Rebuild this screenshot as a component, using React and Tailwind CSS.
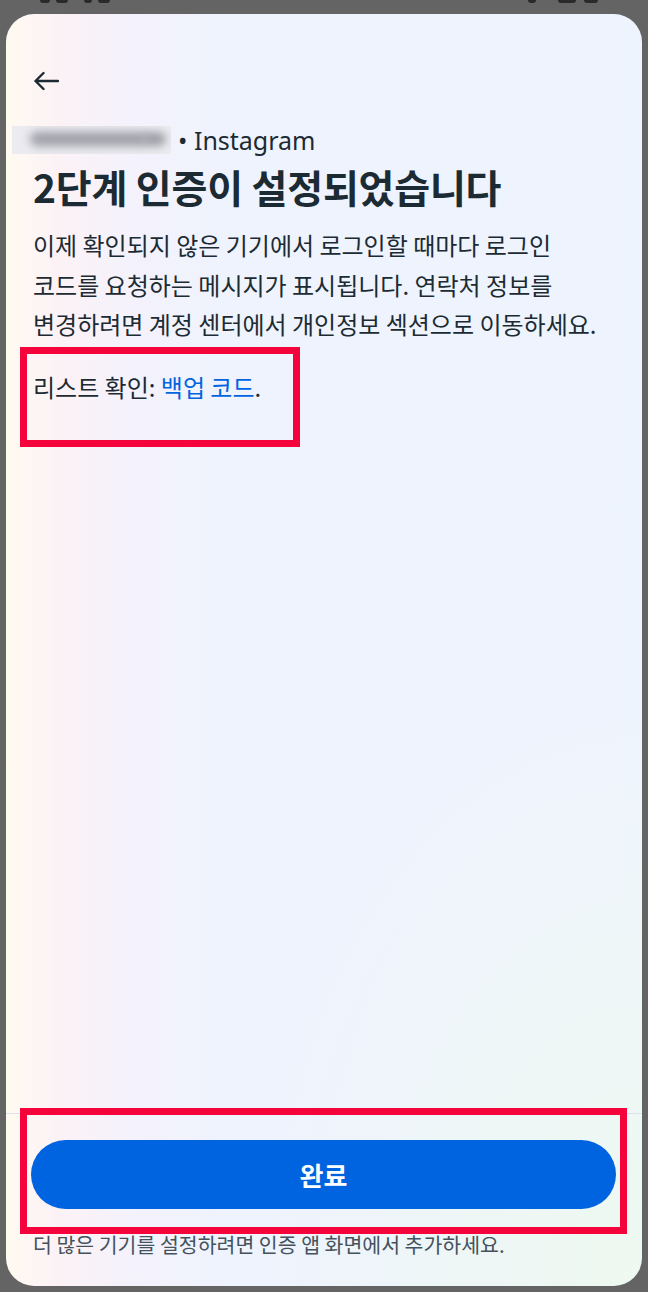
import React from "react";

const ko = { fontFamily: '"Noto Sans CJK KR", "Noto Sans", sans-serif' };

const BackArrow = () => (
  <svg width="26" height="20" viewBox="0 0 26 20" fill="none">
    <path
      d="M25 10H2.5M10.5 2L2.5 10l8 8"
      stroke="#1c2b33"
      strokeWidth="2.4"
      strokeLinecap="round"
      strokeLinejoin="round"
    />
  </svg>
);

export default function App() {
  return (
    <div
      className="w-[648px] h-[1312px] bg-[#646464] flex flex-col overflow-hidden"
      style={ko}
    >
      {/* status bar remnant, cut off by the sheet */}
      <div className="h-[14px] flex justify-between items-start px-[40px]">
        <div className="flex gap-[6px]">
          <div className="w-[10px] h-[3px] bg-[#2a2a2a] rounded-b-sm" />
          <div className="w-[12px] h-[3px] bg-[#2a2a2a] rounded-b-sm" />
          <div className="w-[8px] h-[3px] bg-[#2a2a2a] rounded-b-sm ml-[10px]" />
          <div className="w-[12px] h-[3px] bg-[#2a2a2a] rounded-b-sm" />
        </div>
        <div className="flex gap-[8px] mr-[10px]">
          <div className="w-[8px] h-[3px] bg-[#2a2a2a] rounded-b-sm" />
          <div className="w-[18px] h-[3px] bg-[#2a2a2a] rounded-b-sm ml-[14px]" />
          <div className="w-[14px] h-[3px] bg-[#2a2a2a] rounded-b-sm" />
        </div>
      </div>

      {/* sheet */}
      <div className="mx-[6px] h-[1272px] rounded-[28px] overflow-hidden flex flex-col bg-[radial-gradient(ellipse_60%_45%_at_100%_100%,#eef9f0_0%,#eef9f000_100%),linear-gradient(90deg,#fffaf1_0%,#fcf2f6_8%,#f4f2fc_20%,#eef3fd_36%,#eef4fd_100%)]">
        <div className="px-[27px] pt-[57px]">
          <BackArrow />

          <div className="mt-[34px] flex items-center h-[30px] -ml-[21px]">
            <div className="relative w-[159px] h-[28px] bg-[#ebebf0] overflow-hidden">
              <div className="absolute left-[18px] top-[6px] w-[118px] h-[14px] rounded-full bg-[#9d9fa6] blur-[5px]" />
              <div className="absolute left-[130px] top-[6px] w-[24px] h-[14px] rounded-full bg-[#9d9fa6] blur-[4px]" />
            </div>
            <span
              className="ml-[7px] text-[25px] leading-[30px] text-[#1c2b33]"
              style={{ fontFamily: '"Noto Sans", Roboto, sans-serif' }}
            >
              • Instagram
            </span>
          </div>

          <h1 className="mt-[8px] text-[39px] leading-[46px] font-bold text-[#1c2b33] tracking-[-0.2px]">
            2단계 인증이 설정되었습니다
          </h1>

          <p className="mt-[16px] text-[24px] leading-[39.5px] text-[#1c2b33]">
            이제 확인되지 않은 기기에서 로그인할 때마다 로그인
            <br />
            코드를 요청하는 메시지가 표시됩니다. 연락처 정보를
            <br />
            변경하려면 계정 센터에서 개인정보 섹션으로 이동하세요.
          </p>

          <div className="mt-[3px] -ml-[13px] w-[280px] h-[100px] border-[7px] border-[#f5033b] pl-[6px] pt-[17px]">
            <p className="text-[24px] leading-[32px] text-[#1c2b33]">
              리스트 확인: <span className="text-[#0064e0]">백업 코드</span>.
            </p>
          </div>
        </div>

        <div className="flex-1" />

        <div className="border-t border-[#dde2ea]">
          <div className="-mt-[6px] ml-[14px] mr-[15px] h-[126px] border-[7px] border-[#f5033b] pt-[25px] px-[4px]">
            <button className="w-full h-[69px] rounded-full bg-[#0064e0] text-white text-[26px] font-bold">
              완료
            </button>
          </div>
          <p className="px-[27px] h-[52px] text-[20.5px] leading-[20px] text-[#44525d]">
            더 많은 기기를 설정하려면 인증 앱 화면에서 추가하세요.
          </p>
        </div>
      </div>

      <div className="h-[6px]" />
      <div className="flex-1 bg-white" />
    </div>
  );
}
